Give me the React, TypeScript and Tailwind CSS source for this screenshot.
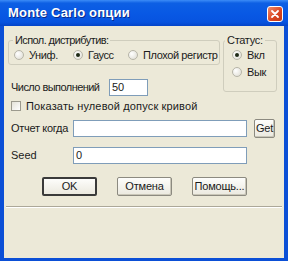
import React from 'react';

const font = { fontFamily: '"Liberation Sans", Arial, sans-serif' };

const Radio: React.FC<{ checked?: boolean; label: string; className?: string }> = ({ checked, label, className }) => (
  <div className={`flex items-center gap-[5px] whitespace-nowrap ${className ?? ''}`}>
    <span className="w-[10px] h-[10px] rounded-full border border-[#b7b5a8] bg-[radial-gradient(circle_at_35%_35%,#ffffff,#dcdad0)] flex items-center justify-center shrink-0">
      {checked && <span className="w-[4px] h-[4px] rounded-full bg-[#1e2a16]" />}
    </span>
    <span className="tracking-[-0.4px]">{label}</span>
  </div>
);

const Btn: React.FC<{ label: string; primary?: boolean; className?: string }> = ({ label, primary, className }) => (
  <button
    className={`h-[19px] flex items-center justify-center rounded-[2px] bg-[linear-gradient(#fdfdfb,#ebe9df)] text-[#1a1a1a] tracking-[-0.2px] ${
      primary ? 'border-2 border-[#3a3a3a]' : 'border border-[#8c8a80] shadow-[inset_-1px_-1px_0_#c9c6b8]'
    } ${className ?? ''}`}
  >
    {label}
  </button>
);

export default function App() {
  return (
    <div className="w-[288px] h-[261px] flex flex-col bg-[#0b4fd6] text-[11px] text-[#1b1b1b]" style={font}>
      {/* title bar */}
      <div className="h-[26px] shrink-0 flex items-center justify-between pl-[8px] pr-[5px] bg-[linear-gradient(#3c8cf7_0%,#0d5fe4_12%,#0858e4_55%,#0753df_85%,#0444c8_100%)]">
        <span className="text-white font-bold text-[13px] tracking-[0.2px] [text-shadow:1px_1px_0_#0a2a8a]">Monte Carlo опции</span>
        <span className="w-[16px] h-[16px] mt-[2px] rounded-[3px] border border-white bg-[linear-gradient(135deg,#f08a6a,#d8441f_60%,#c23a18)] flex items-center justify-center">
          <svg width="10" height="10" viewBox="0 0 10 10">
            <path d="M2 2 L8 8 M8 2 L2 8" stroke="#fff" strokeWidth="1.8" strokeLinecap="round" />
          </svg>
        </span>
      </div>

      {/* body */}
      <div className="flex-1 mx-[4px] mb-[3px] bg-[#ece9d8] pl-[4px] flex flex-col">
        <div className="flex mt-[7px]">
          <div className="w-[212px] flex flex-col">
            <fieldset className="h-[32px] border border-[#cfcdbd] rounded-[3px]">
              <legend className="ml-[4px] px-[2px] leading-[14px] tracking-[-0.6px]">Испол. дистрибутив:</legend>
              <div className="flex items-center h-[14px] mt-[1px] pl-[5px]">
                <Radio label="Униф." className="w-[59px]" />
                <Radio label="Гаусс" checked className="w-[55px]" />
                <Radio label="Плохой регистр" />
              </div>
            </fieldset>
            <div className="flex items-center h-[17px] mt-[14px]">
              <span className="w-[101px] pl-[3px] tracking-[-0.55px]">Число выполнений</span>
              <div className="w-[39px] h-[17px] bg-white border border-[#7f9db9] flex items-center pl-[2px]">50</div>
            </div>
          </div>
          <fieldset className="ml-[3px] w-[54px] h-[59px] border border-[#cfcdbd] rounded-[3px]">
            <legend className="ml-[1px] px-[2px] leading-[14px] tracking-[-0.3px]">Статус:</legend>
            <div className="flex flex-col pl-[8px] mt-[1px] gap-[3px]">
              <Radio label="Вкл" checked className="h-[14px]" />
              <Radio label="Вык" className="h-[14px]" />
            </div>
          </fieldset>
        </div>

        <div className="flex items-center h-[14px] mt-[3px] pl-[3px] gap-[5px]">
          <span className="w-[10px] h-[10px] border border-[#9c9a8e] bg-[linear-gradient(135deg,#e4e2d8,#ffffff)]" />
          <span className="tracking-[0.15px]">Показать нулевой допуск кривой</span>
        </div>

        <div className="flex items-center h-[19px] mt-[6px]">
          <span className="w-[65px] pl-[3px] tracking-[-0.3px]">Отчет когда</span>
          <div className="w-[174px] h-[17px] bg-white border border-[#7f9db9]" />
          <Btn label="Get" className="ml-[7px] w-[21px]" />
        </div>

        <div className="flex items-center h-[17px] mt-[9px]">
          <span className="w-[65px] pl-[3px]">Seed</span>
          <div className="w-[174px] h-[17px] bg-white border border-[#7f9db9] flex items-center pl-[2px]">0</div>
        </div>

        <div className="flex items-center mt-[13px] pl-[34px] gap-[20px]">
          <Btn label="OK" primary className="w-[55px]" />
          <Btn label="Отмена" className="w-[55px]" />
          <Btn label="Помощь..." className="w-[55px]" />
        </div>

        <div className="mt-[10px] mr-[2px] -ml-[2px] h-[2px] border-t border-[#aca899] border-b border-b-white" />
      </div>
    </div>
  );
}
